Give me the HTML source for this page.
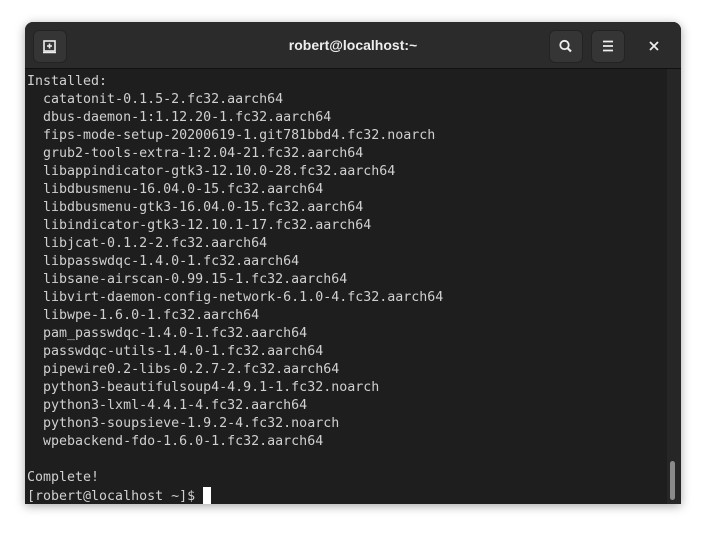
<!DOCTYPE html>
<html><head><style>
body{margin:0;width:706px;height:533px;background:#fff;position:relative;overflow:hidden;font-family:"Liberation Sans",sans-serif}
.win{position:absolute;left:25px;top:22px;width:656px;height:482px;background:#1e1e1e;border-radius:8px 8px 0 0;box-shadow:0 2px 10px rgba(0,0,0,.35);overflow:hidden}
.hdr{position:absolute;left:0;top:0;width:656px;height:46px;background:#2b2b2b;border-bottom:1px solid #111}
.btn{position:absolute;top:8px;width:34px;height:33px;background:#353535;border-radius:6px;border:1px solid #232323;box-sizing:border-box}
.title{position:absolute;left:0;right:0;top:15px;text-align:center;color:#eee;font-weight:bold;font-size:14px}
.term{position:absolute;left:2px;top:51px;font-family:"DejaVu Sans Mono","Liberation Mono",monospace;font-size:13.3px;line-height:18px;color:#d0d0d0;white-space:pre;margin:0}
.sb{position:absolute;left:645px;top:439px;width:5px;height:39px;background:#8a8a8a;border-radius:3px}
.sbt{position:absolute;left:642px;top:47px;width:14px;height:435px;background:#262626}
.cur{display:inline-block;width:8px;height:17px;background:#fff;vertical-align:-4px}
</style></head><body>
<div class="win">
<div class="hdr">
<div class="btn" style="left:8px"><svg width="32" height="31" viewBox="0 0 32 31"><rect x="10" y="10" width="11" height="10" fill="none" stroke="#eee" stroke-width="1.6"/><path d="M15.5 12.5v5M13 15h5" stroke="#eee" stroke-width="1.6"/><path d="M9 21.5h13" stroke="#eee" stroke-width="1.6"/></svg></div>
<div class="title">robert@localhost:~</div>
<div class="btn" style="left:524px"><svg width="32" height="31" viewBox="0 0 32 31"><circle cx="14.5" cy="14" r="4.2" fill="none" stroke="#eee" stroke-width="1.8"/><path d="M17.5 17l3.5 3.5" stroke="#eee" stroke-width="2.2"/></svg></div>
<div class="btn" style="left:566px"><svg width="32" height="31" viewBox="0 0 32 31"><path d="M11 10.5h10M11 15h10M11 19.5h10" stroke="#eee" stroke-width="1.8"/></svg></div>
<svg style="position:absolute;left:622px;top:17px" width="14" height="14" viewBox="0 0 14 14"><path d="M3 3l8 8M11 3l-8 8" stroke="#eee" stroke-width="1.8"/></svg>
</div>
<div class="sbt"></div><div class="sb"></div>
<pre class="term">Installed:
  catatonit-0.1.5-2.fc32.aarch64
  dbus-daemon-1:1.12.20-1.fc32.aarch64
  fips-mode-setup-20200619-1.git781bbd4.fc32.noarch
  grub2-tools-extra-1:2.04-21.fc32.aarch64
  libappindicator-gtk3-12.10.0-28.fc32.aarch64
  libdbusmenu-16.04.0-15.fc32.aarch64
  libdbusmenu-gtk3-16.04.0-15.fc32.aarch64
  libindicator-gtk3-12.10.1-17.fc32.aarch64
  libjcat-0.1.2-2.fc32.aarch64
  libpasswdqc-1.4.0-1.fc32.aarch64
  libsane-airscan-0.99.15-1.fc32.aarch64
  libvirt-daemon-config-network-6.1.0-4.fc32.aarch64
  libwpe-1.6.0-1.fc32.aarch64
  pam_passwdqc-1.4.0-1.fc32.aarch64
  passwdqc-utils-1.4.0-1.fc32.aarch64
  pipewire0.2-libs-0.2.7-2.fc32.aarch64
  python3-beautifulsoup4-4.9.1-1.fc32.noarch
  python3-lxml-4.4.1-4.fc32.aarch64
  python3-soupsieve-1.9.2-4.fc32.noarch
  wpebackend-fdo-1.6.0-1.fc32.aarch64

Complete!
[robert@localhost ~]$ <span class="cur"></span></pre>
</div>
</body></html>
